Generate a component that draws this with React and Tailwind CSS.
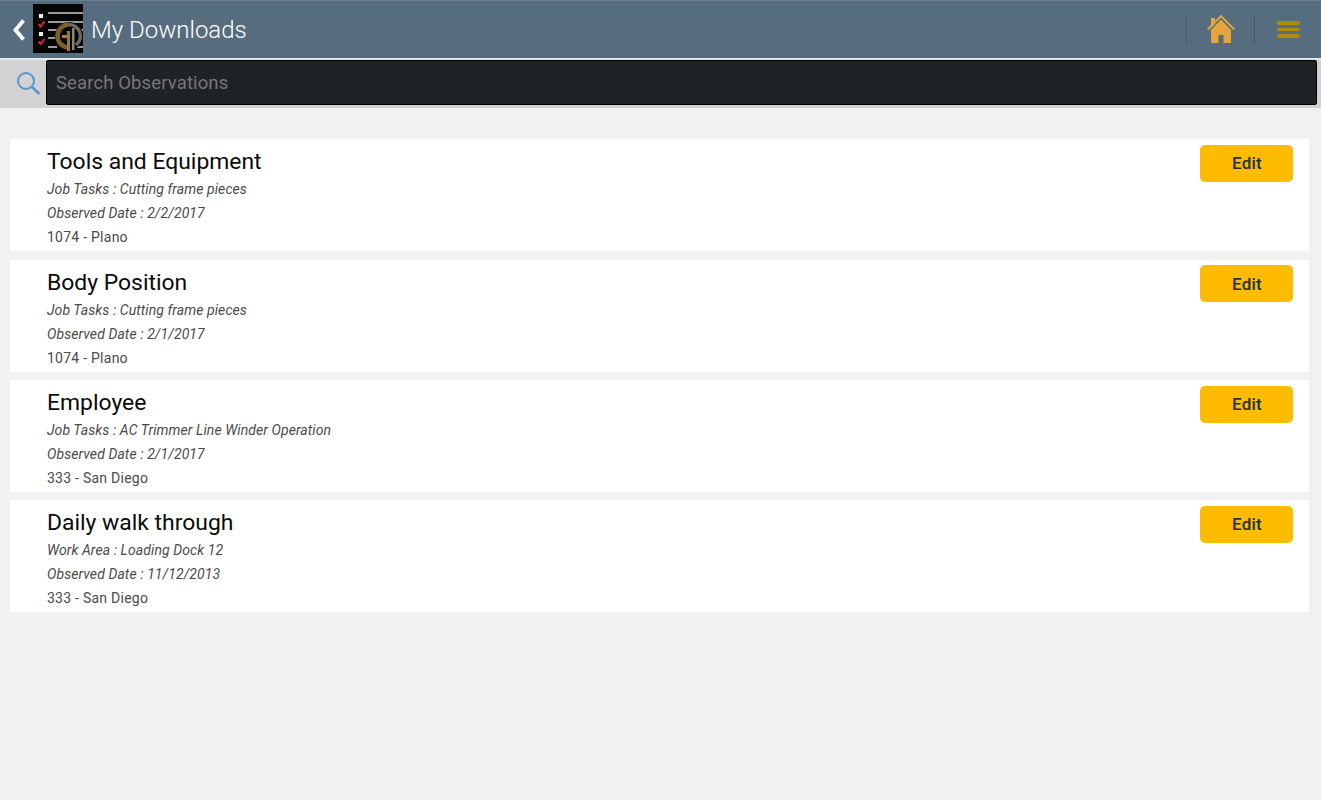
const roboto = "font-['Roboto',sans-serif]";

const observations = [
  { title: 'Tools and Equipment', task: 'Job Tasks : Cutting frame pieces', date: 'Observed Date : 2/2/2017', site: '1074 - Plano' },
  { title: 'Body Position', task: 'Job Tasks : Cutting frame pieces', date: 'Observed Date : 2/1/2017', site: '1074 - Plano' },
  { title: 'Employee', task: 'Job Tasks : AC Trimmer Line Winder Operation', date: 'Observed Date : 2/1/2017', site: '333 - San Diego' },
  { title: 'Daily walk through', task: 'Work Area : Loading Dock 12', date: 'Observed Date : 11/12/2013', site: '333 - San Diego' },
];

function Logo() {
  return (
    <svg width="50" height="49" viewBox="0 0 50 49" className="shrink-0">
      <rect width="50" height="49" fill="#050505" />
      <g stroke="#cfcfcf" strokeWidth="1.3">
        <path d="M15 9H50M15 18H50M15 26H26M15 34H22M15 43H24M44 43H50M46 26H50M47 34H50" />
      </g>
      <rect x="6" y="10" width="4" height="4" fill="#eee" />
      <rect x="6" y="28" width="4" height="4" fill="#eee" />
      <path d="M5.500 20l2 2.500 4-5M5.500 37.500l2 2.500 4-5" fill="none" stroke="#e8283c" strokeWidth="1.800" />
      <circle cx="36" cy="32" r="14" fill="#050505" />
      <path d="M36 20.500A11.500 11.500 0 0 0 36 43.500" fill="none" stroke="#7d5f28" strokeWidth="4.500" />
      <path d="M36 20.500A11.500 11.500 0 0 1 43 41" fill="none" stroke="#6f6a60" strokeWidth="3.500" />
      <path d="M29 31h5v3h-5z" fill="#a77f35" />
      <path d="M34 27h3v20h-3z" fill="#96793f" />
      <path d="M39 24h2.500v22H39z" fill="#8a8578" />
    </svg>
  );
}

function HomeIcon() {
  return (
    <svg width="28" height="29" viewBox="0 0 28 29" className="block">
      <path d="M4 13V3h4v6z" fill="#e2a63d" />
      <path d="M4 15L14 4.500 24 15V28H16.500V20H11.500V28H4Z" fill="#e2a63d" />
      <path d="M0.700 14.500L14 1 27.300 14.500" fill="none" stroke="#e2a63d" strokeWidth="1.800" />
    </svg>
  );
}

function ObservationCard({ item }) {
  return (
    <div className="flex h-[112px] justify-between bg-white pl-[37px] pr-[16px]">
      <div className="min-w-0">
        <h2 className="mt-[9px] text-[22.900px] leading-[28px] text-[#0a0a0a]">{item.title}</h2>
        <p className="mt-[1px] text-[14px] leading-[24px] tracking-[0.08px] text-[#4a4a4a] italic">{item.task}</p>
        <p className="text-[14px] leading-[24px] tracking-[0.08px] text-[#4a4a4a] italic">{item.date}</p>
        <p className="text-[14px] leading-[24px] tracking-[0.25px] text-[#4a4a4a]">{item.site}</p>
      </div>
      <button className="mt-[5.600px] h-[37px] w-[93px] rounded-[5px] bg-[#ffbb00] pl-px pt-px text-[17px] font-medium tracking-[0.2px] text-[#26303d]">
        Edit
      </button>
    </div>
  );
}

export default function App() {
  return (
    <div className={`${roboto} flex min-h-[800px] flex-col bg-[#f1f1f1]`}>
      <header className="flex h-[58px] items-center border-t border-[#6d7f8d] bg-[#566d80]">
        <svg width="14" height="24" viewBox="0 0 14 24" className="ml-[12px] shrink-0">
          <path d="M11.500 2.500L3.500 12l8 9.500" fill="none" stroke="#fff" strokeWidth="3.800" />
        </svg>
        <div className="-mt-[3px] ml-[7px]"><Logo /></div>
        <h1 className="ml-[8px] pt-px text-[24px] font-light text-white">My Downloads</h1>
        <div className="ml-auto flex items-center">
          <div className="h-[27px] w-px bg-[#465a68]" />
          <div className="ml-[20px] mt-[-1px]"><HomeIcon /></div>
          <div className="ml-[19px] h-[27px] w-px bg-[#465a68]" />
          <div className="ml-[22px] mr-[21.500px] flex w-[22.500px] flex-col gap-[3px]">
            <span className="h-[3.500px] rounded-full bg-[#b08a08]" />
            <span className="h-[3.500px] rounded-full bg-[#b08a08]" />
            <span className="h-[3.500px] rounded-full bg-[#b08a08]" />
          </div>
        </div>
      </header>

      <div className="flex h-[50px] items-start border-t-2 border-[#e6e6e6] bg-[#d2d2d2] pr-[4.500px]">
        <svg width="26" height="26" viewBox="0 0 26 26" className="ml-[16px] mt-[11px] shrink-0">
          <circle cx="10" cy="10" r="8" fill="none" stroke="#5a96c5" strokeWidth="2" />
          <path d="M16 16L23.500 23" stroke="#5a96c5" strokeWidth="2.500" />
        </svg>
        <div className="ml-[4px] flex h-[45px] flex-1 items-center rounded-[2px] border border-black bg-[#1e2326] pl-[9px] pt-[3px] text-[18.500px] tracking-[0.12px] text-[#777]">
          Search Observations
        </div>
      </div>

      <main className="flex flex-col gap-[8.300px] pl-[10px] pr-[12px] pt-[31.400px]">
        {observations.map((item) => (
          <ObservationCard key={item.title} item={item} />
        ))}
      </main>
    </div>
  );
}
